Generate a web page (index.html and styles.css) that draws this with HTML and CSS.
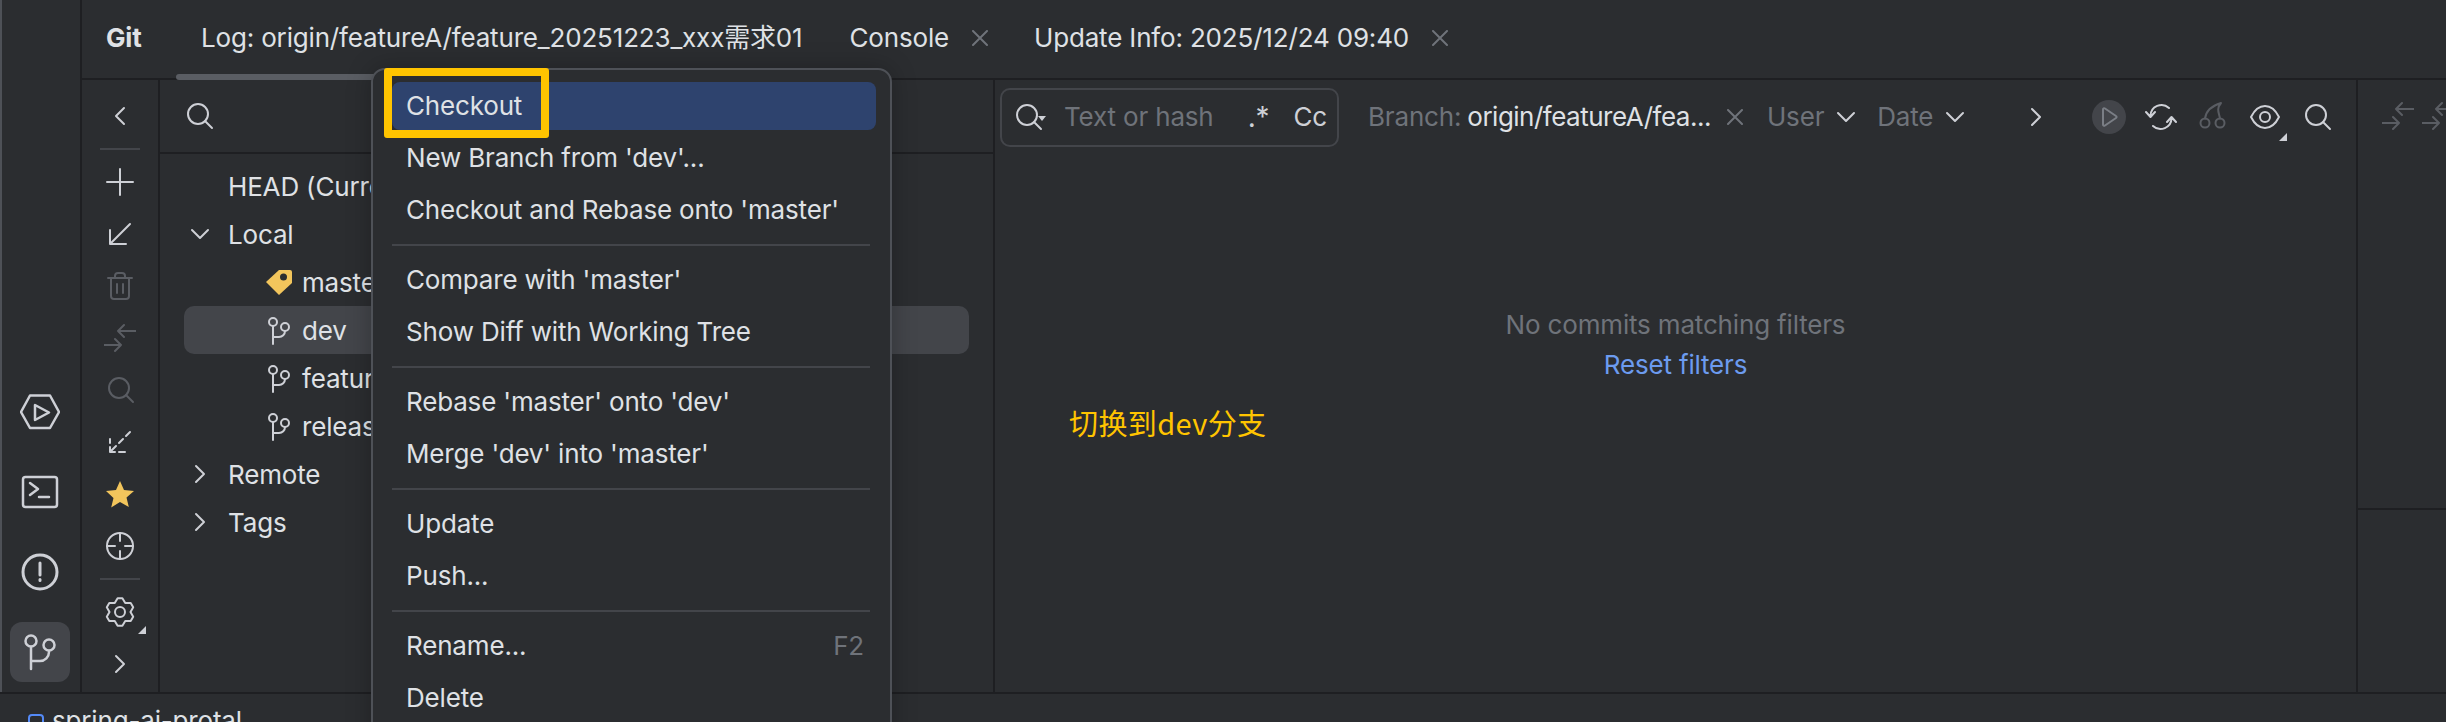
FILE: index.html
```html
<!DOCTYPE html>
<html lang="zh">
<head>
<meta charset="utf-8">
<title>Git</title>
<link rel="stylesheet" href="styles.css">
</head>
<body>
<svg class="sprite" aria-hidden="true">
  <symbol id="i-chev-l" viewBox="0 0 32 32"><path d="M20 8l-8 8 8 8"/></symbol>
  <symbol id="i-chev-r" viewBox="0 0 32 32"><path d="M12 8l8 8-8 8"/></symbol>
  <symbol id="i-chev-d" viewBox="0 0 32 32"><path d="M8 12l8 8 8-8"/></symbol>
  <symbol id="i-plus" viewBox="0 0 32 32"><path d="M16 3v26M3 16h26"/></symbol>
  <symbol id="i-dl" viewBox="0 0 32 32"><path d="M6 12v14h16M6 26L26 6"/></symbol>
  <symbol id="i-dl-dash" viewBox="0 0 32 32"><path d="M6 13v4M6 21v5h5M15 26h6M26 6l-4 4M19 13l-4 4M12 20l-5 5"/></symbol>
  <symbol id="i-trash" viewBox="0 0 32 32"><path d="M4 8h24M11 8V6a3 3 0 0 1 3-3h4a3 3 0 0 1 3 3v2M7 8v18a3 3 0 0 0 3 3h12a3 3 0 0 0 3-3V8M13 14v9M19 14v9"/></symbol>
  <symbol id="i-arrows" viewBox="0 0 32 32"><path d="M32 9H14M20 3l-6 6 6 6M0 23h17M11 17l6 6-6 6"/></symbol>
  <symbol id="i-search" viewBox="0 0 32 32"><circle cx="15" cy="14" r="10"/><path d="M22 21l7 7"/></symbol>
  <symbol id="i-cross" viewBox="0 0 32 32"><circle cx="16" cy="16" r="13"/><path d="M16 3v8M16 21v8M3 16h8M21 16h8"/></symbol>
  <symbol id="i-gear" viewBox="0 0 32 32"><path d="M13.6 2.2H18.4L21.25 6.9L26.7 7L29.2 11.2L26.5 16L29.2 20.8L26.7 25L21.25 25.1L18.4 29.8H13.6L10.75 25.1L5.3 25L2.8 20.8L5.5 16L2.8 11.2L5.3 7L10.75 6.9Z"/><circle cx="16" cy="16" r="5"/></symbol>
  <symbol id="i-branch" viewBox="0 0 32 32"><circle cx="10" cy="8" r="4"/><circle cx="22" cy="13" r="4"/><path d="M10 12v18M10 23h6a6 6 0 0 0 6-6"/></symbol>
  <symbol id="i-close" viewBox="0 0 16 16"><path d="M1 1l14 14M15 1L1 15"/></symbol>
  <symbol id="i-run" viewBox="0 0 40 40"><path d="M1 20L10 3.5H30L39 20L30 36H10ZM15 13v15l14-7.5Z"/></symbol>
  <symbol id="i-term" viewBox="0 0 40 40"><rect x="3" y="5" width="34" height="30" rx="2.5"/><path d="M10 11l8 6-8 6M19 25h10"/></symbol>
  <symbol id="i-problem" viewBox="0 0 40 40"><circle cx="20" cy="20" r="17"/><path d="M20 11v12M20 27.5v1"/></symbol>
  <symbol id="i-git" viewBox="0 0 40 40"><circle cx="11" cy="9" r="5.5"/><circle cx="29" cy="13" r="5.5"/><path d="M11 15v22M11 29h9a9 9 0 0 0 9-9v-1"/></symbol>
  <symbol id="i-refresh" viewBox="0 0 32 32"><path d="M5.5 15A11 11 0 0 1 24 7M26.5 17A11 11 0 0 1 8 25M1 11l4.5 5 4.5-5M22 21l4.500-5 4.500 5"/></symbol>
  <symbol id="i-cherry" viewBox="0 0 32 32"><circle cx="8" cy="22" r="4.500"/><circle cx="23" cy="22" r="4.500"/><path d="M24 2C14 5 9 10 8 17.500M24 2c-5 6-2 10-1 15.500"/></symbol>
  <symbol id="i-eye" viewBox="0 0 32 32"><path d="M2 16C6 8 11 5 16 5s10 3 14 11c-4 8-9 11-14 11S6 24 2 16Z"/><circle cx="16" cy="16" r="5"/></symbol>
  <symbol id="i-play" viewBox="0 0 32 32"><path d="M10 8.500v15c0 1.200 1 1.700 2 1l11-7.500c.8-.5.8-1.500 0-2l-11-7.500c-1-.7-2-.2-2 1Z"/></symbol>
</svg>

<div class="page">
  <div class="main">
    <nav class="stripe">
      <span class="stripe-btn"><svg class="ic40"><use href="#i-run"/></svg></span>
      <span class="stripe-btn"><svg class="ic40"><use href="#i-term"/></svg></span>
      <span class="stripe-btn"><svg class="ic40 thick"><use href="#i-problem"/></svg></span>
      <span class="stripe-btn active"><svg class="ic40"><use href="#i-git"/></svg></span>
    </nav>

    <div class="tool">
      <header class="tabs">
        <span class="tool-name">Git</span>
        <span class="tab tab-active">Log: origin/featureA/feature_20251223_xxx需求01</span>
        <span class="tab tab-console">Console<svg class="close"><use href="#i-close"/></svg></span>
        <span class="tab tab-update">Update Info: 2025/12/24 09:40<svg class="close"><use href="#i-close"/></svg></span>
      </header>

      <div class="panes">
        <aside class="side">
          <span class="side-btn"><svg class="ic"><use href="#i-chev-l"/></svg></span>
          <span class="side-sep"></span>
          <span class="side-btn"><svg class="ic"><use href="#i-plus"/></svg></span>
          <span class="side-btn"><svg class="ic"><use href="#i-dl"/></svg></span>
          <span class="side-btn"><svg class="ic dim"><use href="#i-trash"/></svg></span>
          <span class="side-btn"><svg class="ic dim"><use href="#i-arrows"/></svg></span>
          <span class="side-btn"><svg class="ic dim"><use href="#i-search"/></svg></span>
          <span class="side-btn"><svg class="ic"><use href="#i-dl-dash"/></svg></span>
          <span class="side-btn">
            <svg class="ic" viewBox="0 0 32 32"><path class="gold" d="M16 3l4 9 10 1-7.500 6.500 2.300 9.500L16 24l-8.800 5.500 2.300-9.500L2 13l10-1z"/></svg>
          </span>
          <span class="side-btn"><svg class="ic"><use href="#i-cross"/></svg></span>
          <span class="side-sep"></span>
          <span class="side-btn corner"><svg class="ic"><use href="#i-gear"/></svg></span>
          <span class="side-btn"><svg class="ic"><use href="#i-chev-r"/></svg></span>
        </aside>

        <section class="branches">
          <div class="tree-search"><svg class="ic"><use href="#i-search"/></svg></div>
          <ul class="tree">
            <li class="row lvl1">HEAD (Current Branch)</li>
            <li class="row lvl1"><svg class="ic twisty"><use href="#i-chev-d"/></svg>Local</li>
            <li class="row lvl2">
              <svg class="ic leaf" viewBox="0 0 32 32"><path class="gold" d="M16 4h11a2 2 0 0 1 2 2v11L16 29 3 16z"/><circle class="hole" cx="20.500" cy="11" r="3.500"/></svg>master
            </li>
            <li class="row lvl2 row-sel"><svg class="ic leaf"><use href="#i-branch"/></svg>dev</li>
            <li class="row lvl2"><svg class="ic leaf"><use href="#i-branch"/></svg>feature</li>
            <li class="row lvl2"><svg class="ic leaf"><use href="#i-branch"/></svg>release</li>
            <li class="row lvl1"><svg class="ic twisty"><use href="#i-chev-r"/></svg>Remote</li>
            <li class="row lvl1"><svg class="ic twisty"><use href="#i-chev-r"/></svg>Tags</li>
          </ul>
        </section>

        <section class="log">
          <div class="log-bar">
            <div class="filter-box">
              <svg class="ic"><use href="#i-search"/></svg><i class="tri-small"></i>
              <span class="placeholder">Text or hash</span>
              <span class="regex">.*</span>
              <span class="case">Cc</span>
            </div>
            <span class="flt flt-branch">Branch: <b>origin/featureA/fea...</b><svg class="close"><use href="#i-close"/></svg></span>
            <span class="flt flt-user">User<svg class="ic chev-f"><use href="#i-chev-d"/></svg></span>
            <span class="flt flt-date">Date<svg class="ic chev-f"><use href="#i-chev-d"/></svg></span>
            <svg class="ic more"><use href="#i-chev-r"/></svg>
            <span class="act act-run"><svg class="ic dimmer"><use href="#i-play"/></svg></span>
            <span class="act"><svg class="ic"><use href="#i-refresh"/></svg></span>
            <span class="act"><svg class="ic dim"><use href="#i-cherry"/></svg></span>
            <span class="act act-corner"><svg class="ic"><use href="#i-eye"/></svg></span>
            <span class="act"><svg class="ic"><use href="#i-search"/></svg></span>
          </div>
          <div class="log-empty">
            <p class="empty-msg">No commits matching filters</p>
            <p class="empty-link">Reset filters</p>
          </div>
        </section>

        <section class="details">
          <div class="details-top">
            <svg class="ic dim"><use href="#i-arrows"/></svg>
            <svg class="ic dim"><use href="#i-arrows"/></svg>
          </div>
          <div class="details-bottom"></div>
        </section>
      </div>
    </div>
  </div>

  <footer class="status"><i class="module"></i>spring-ai-protal</footer>

  <div class="menu">
    <div class="item item-sel">Checkout</div>
    <div class="item">New Branch from 'dev'...</div>
    <div class="item">Checkout and Rebase onto 'master'</div>
    <div class="sep"></div>
    <div class="item">Compare with 'master'</div>
    <div class="item">Show Diff with Working Tree</div>
    <div class="sep"></div>
    <div class="item">Rebase 'master' onto 'dev'</div>
    <div class="item">Merge 'dev' into 'master'</div>
    <div class="sep"></div>
    <div class="item">Update</div>
    <div class="item">Push...</div>
    <div class="sep"></div>
    <div class="item">Rename...<span class="key">F2</span></div>
    <div class="item">Delete</div>
  </div>

  <div class="callout"></div>
  <div class="note">切换到dev分支</div>
</div>
</body>
</html>
```

FILE: styles.css
```css
* { box-sizing: border-box; }
html, body { margin: 0; padding: 0; }
body {
  width: 2446px;
  height: 722px;
  overflow: hidden;
  background: #2b2d30;
  color: #dfe1e5;
  font: 26px/32px Inter, "Noto Sans CJK SC", sans-serif;
  letter-spacing: -0.17px;
}
.sprite { display: none; }
.page { position: relative; width: 2446px; height: 722px; overflow: hidden; }
.main { display: flex; height: 694px; border-bottom: 2px solid #1e1f22; }

svg { fill: none; stroke: #ced0d6; stroke-width: 2; stroke-linecap: round; stroke-linejoin: round; overflow: visible; flex: none; }
.ic { width: 32px; height: 32px; display: block; }
.ic40 { width: 40px; height: 40px; display: block; stroke-width: 2.5; }
.thick { stroke-width: 3; }
.dim { stroke: #5a5d63; }
.dimmer { stroke: #7a7e85; }
.gold { fill: #f2c55c; stroke: none; }
.hole { fill: #2b2d30; stroke: none; }
.close { width: 16px; height: 16px; stroke: #6f737a; }

/* left stripe */
.stripe {
  width: 82px;
  flex: none;
  display: flex;
  flex-direction: column;
  justify-content: flex-end;
  gap: 20px;
  padding: 0 0 10px 8px;
  border-left: 2px solid #4e5157;
  border-right: 2px solid #1e1f22;
}
.stripe-btn { width: 60px; height: 60px; border-radius: 12px; display: flex; align-items: center; justify-content: center; }
.stripe-btn.active { background: #43454a; }

/* tool window */
.tool { flex: 1; display: flex; flex-direction: column; min-width: 0; }
.tabs { position: relative; height: 80px; flex: none; display: flex; align-items: center; padding: 0 0 2px 24px; border-bottom: 2px solid #1e1f22; white-space: nowrap; }
.tool-name { font-weight: 700; width: 70px; }
.tab { display: flex; align-items: center; }
.tab-active { position: relative; padding: 0 25px; }
.tab-active::after { content: ""; position: absolute; left: 0; right: 0; top: 52px; height: 6px; border-radius: 3px; background: #5a5d63; }
.tab-console { margin-left: 22px; gap: 23px; }
.tab-update { margin-left: 46px; gap: 23px; }

.panes { flex: 1; display: flex; min-height: 0; }

.side { width: 78px; flex: none; display: flex; flex-direction: column; align-items: center; padding-top: 10px; border-right: 2px solid #1e1f22; }
.side-btn { position: relative; height: 52px; width: 52px; flex: none; display: flex; align-items: center; justify-content: center; }
.side-sep { width: 40px; height: 2px; margin: 6px 0; background: #43454a; flex: none; }
.corner::after { content: ""; position: absolute; right: 0; bottom: 4px; border-left: 8px solid transparent; border-bottom: 8px solid #ced0d6; }

.branches { width: 835px; flex: none; border-right: 2px solid #1e1f22; }
.tree-search { height: 74px; padding: 20px 0 0 23px; border-bottom: 2px solid #1e1f22; }
.tree { list-style: none; margin: 0; padding: 8px 24px 0; }
.row { position: relative; height: 48px; display: flex; align-items: center; padding-top: 2px; border-radius: 10px; white-space: nowrap; }
.lvl1 { padding-left: 44px; }
.lvl2 { padding-left: 118px; }
.twisty { position: absolute; left: 0; top: 8px; }
.leaf { position: absolute; left: 79px; top: 8px; }
.row-sel { background: #43454a; }

.log { width: 1363px; flex: none; display: flex; flex-direction: column; border-right: 2px solid #1e1f22; }
.log-bar { height: 74px; flex: none; display: flex; align-items: center; padding-left: 5px; color: #6f737a; white-space: nowrap; }
.filter-box { position: relative; width: 339px; height: 59px; flex: none; display: flex; align-items: center; padding-left: 10px; border: 2px solid #43454a; border-radius: 10px; }
.tri-small { position: absolute; left: 36px; top: 26px; border-left: 4px solid transparent; border-right: 4px solid transparent; border-top: 5px solid #ced0d6; }
.placeholder { margin-left: 20px; }
.regex { margin-left: auto; color: #ced0d6; font-size: 28px; }
.case { margin: 0 10px 0 24px; color: #ced0d6; }
.flt { display: flex; align-items: center; }
.flt b { font-weight: 400; color: #dfe1e5; margin-left: 6px; letter-spacing: -0.5px; }
.flt-branch { margin-left: 29px; }
.flt-branch .close { margin: 0 0 0 16px; }
.flt-user { margin-left: 24px; }
.flt-date { margin-left: 15px; }
.chev-f { margin-left: 6px; }
.more { margin-left: 49px; }
.act { position: relative; width: 52px; height: 52px; flex: none; display: flex; align-items: center; justify-content: center; }
.act-run { margin-left: 31px; }
.act-run::before { content: ""; position: absolute; left: 9px; top: 9px; width: 34px; height: 34px; border-radius: 50%; background: #43454a; }
.act-run svg { position: relative; }
.act-corner::after { content: ""; position: absolute; right: 4px; bottom: 2px; border-left: 8px solid transparent; border-bottom: 8px solid #ced0d6; }

.log-empty { text-align: center; padding-top: 155px; color: #6f737a; }
.log-empty p { margin: 0; }
.empty-link { color: #6c9bef; padding-top: 8px; }

.details { flex: 1; display: flex; flex-direction: column; min-width: 0; overflow: hidden; }
.details-top { height: 430px; flex: none; border-bottom: 2px solid #1e1f22; display: flex; gap: 8px; padding: 20px 0 0 24px; }
.details-bottom { flex: 1; }

.status { display: flex; align-items: flex-start; gap: 8px; padding: 11px 0 0 28px; line-height: 32px; color: #dfe1e5; }
.module { width: 16px; height: 16px; border: 2px solid #548af7; border-radius: 4px; margin-top: 9px; flex: none; }

/* popup menu */
.menu { position: absolute; left: 371px; top: 68px; width: 521px; height: 700px; display: flex; flex-direction: column; padding: 10px 14px 0 19px; background: #2b2d30; border: 2px solid #4e5157; border-radius: 14px; box-shadow: 0 0 24px rgba(0, 0, 0, .25); }
.item { height: 48px; flex: none; margin: 2px 0; padding: 0 12px 0 14px; display: flex; align-items: center; justify-content: space-between; border-radius: 8px; white-space: nowrap; }
.item-sel { background: #2e436e; }
.key { color: #6f737a; }
.sep { height: 2px; flex: none; width: 478px; margin: 8px 0; background: #43454a; }

/* screenshot annotations */
.callout { position: absolute; left: 384px; top: 68px; width: 165px; height: 70px; border: 8px solid #ffc400; border-radius: 3px; }
.note { position: absolute; left: 1069px; top: 404px; color: #ffc400; font-size: 29px; line-height: 36px; font-family: "Noto Sans CJK SC", sans-serif; font-weight: 400; letter-spacing: 0.4px; }
```
